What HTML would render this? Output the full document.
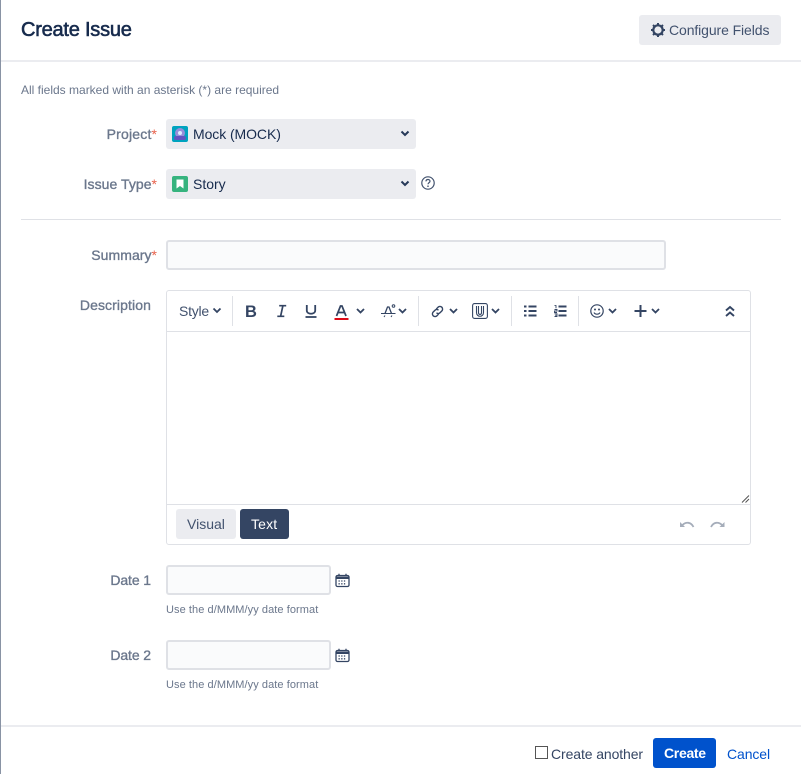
<!DOCTYPE html>
<html><head><meta charset="utf-8">
<style>
html,body{margin:0;padding:0;background:#fff}
body{width:801px;height:774px;position:relative;overflow:hidden;font-family:"Liberation Sans",sans-serif;color:#172b4d}
.a{position:absolute}
.t{position:absolute;white-space:nowrap;line-height:20px}
.lab{color:#6b778c;font-size:14px;font-weight:400;text-align:right;-webkit-text-stroke:.35px #6b778c;letter-spacing:.05px}
.req{color:#e8604a;font-size:14px;-webkit-text-stroke:0;letter-spacing:0}
.sel{position:absolute;left:166px;width:250px;height:30px;background:#ebecf0;border-radius:3px}
.inp{position:absolute;background:#fafbfc;border:2px solid #dfe1e6;border-radius:3px;box-sizing:border-box}
.sep{position:absolute;top:296px;width:1px;height:30px;background:#dfe1e6}
svg{position:absolute;overflow:visible}
.hint{position:absolute;font-size:11px;color:#6b778c;line-height:14px;white-space:nowrap;letter-spacing:.07px}
</style></head><body>
<div class="a" style="left:0;top:0;width:1px;height:774px;background:#8993a4"></div>
<div class="t" style="left:21px;top:18px;font-size:20px;line-height:24px;font-weight:400;color:#172b4d;letter-spacing:-.23px;-webkit-text-stroke:.6px #172b4d">Create Issue</div>
<div class="a" style="left:639px;top:15px;width:142px;height:30px;background:#ebecf0;border-radius:3px"></div>
<svg style="left:650px;top:22px" width="16" height="16" viewBox="0 0 16 16"><circle cx="8" cy="8" r="4.700" fill="none" stroke="#344563" stroke-width="2.200"/><g stroke="#344563" stroke-width="2"><path d="M8 1v2.200M8 12.800V15M1 8h2.200M12.800 8H15M3 3l1.600 1.600M11.400 11.400L13 13M3 13l1.600-1.600M11.400 4.600L13 3"/></g></svg>
<div class="t" style="left:669px;top:20px;font-size:14px;color:#42526e;letter-spacing:-.1px">Configure Fields</div>
<div class="a" style="left:1px;top:60px;width:800px;height:2px;background:#ebecf0"></div>
<div class="t" style="left:21px;top:80px;font-size:12px;color:#6b778c;letter-spacing:0">All fields marked with an asterisk (*) are required</div>

<div class="t lab" style="right:644px;top:124px;letter-spacing:.2px">Project<span class="req">*</span></div>
<div class="sel" style="top:119px"></div>
<div class="a" style="left:172px;top:126px;width:16px;height:16px;background:#00a3bf;border-radius:2px;overflow:hidden"><div class="a" style="left:3px;top:2px;width:10px;height:10px;border-radius:50%;background:#998dd9"></div><div class="a" style="left:2px;top:10px;width:12px;height:4px;border-radius:2px;background:#6554c0"></div><div class="a" style="left:6px;top:5px;width:4px;height:4px;border-radius:50%;background:#deebff"></div></div>
<div class="t" style="left:193px;top:124px;font-size:14px;color:#172b4d;letter-spacing:-.08px">Mock (MOCK)</div>
<svg style="left:400px;top:130px" width="10" height="8" viewBox="0 0 10 8"><path d="M1.500 1.500L5 5L8.500 1.500" fill="none" stroke="#253858" stroke-width="2"/></svg>

<div class="t lab" style="right:644px;top:174px">Issue Type<span class="req">*</span></div>
<div class="sel" style="top:169px"></div>
<div class="a" style="left:172px;top:176px;width:16px;height:16px;background:#36b37e;border-radius:2px"></div>
<svg style="left:172px;top:176px" width="16" height="16" viewBox="0 0 16 16"><path d="M4.500 3.500h7v9L8 10l-3.500 2.500z" fill="#fff"/></svg>
<div class="t" style="left:193px;top:174px;font-size:14px;color:#172b4d">Story</div>
<svg style="left:400px;top:180px" width="10" height="8" viewBox="0 0 10 8"><path d="M1.500 1.500L5 5L8.500 1.500" fill="none" stroke="#253858" stroke-width="2"/></svg>
<svg style="left:421px;top:176px" width="14" height="14" viewBox="0 0 14 14"><circle cx="7" cy="7" r="6.200" fill="none" stroke="#42526e" stroke-width="1.200"/><path d="M5 5.400C5 4 6 3.500 7 3.500S9 4.200 9 5.300C9 6.700 7 6.600 7 8.300" fill="none" stroke="#42526e" stroke-width="1.200"/><circle cx="7" cy="10.200" r=".8" fill="#42526e"/></svg>

<div class="a" style="left:21px;top:219px;width:760px;height:1px;background:#dfe1e6"></div>

<div class="t lab" style="right:644px;top:245px">Summary<span class="req">*</span></div>
<div class="inp" style="left:166px;top:240px;width:500px;height:30px"></div>

<div class="t lab" style="right:650px;top:295px;letter-spacing:.1px">Description</div>
<div class="a" style="left:166px;top:290px;width:585px;height:255px;box-sizing:border-box;border:1px solid #dfe1e6;border-radius:3px"></div>
<div class="a" style="left:167px;top:331px;width:583px;height:1px;background:#dfe1e6"></div>
<div class="a" style="left:167px;top:504px;width:583px;height:1px;background:#dfe1e6"></div>

<div class="t" style="left:179px;top:301px;font-size:14px;color:#42526e;letter-spacing:-.25px">Style</div>
<svg style="left:212px;top:307px" width="10" height="8"><path d="M1.500 1.500L5 5L8.500 1.500" fill="none" stroke="#344563" stroke-width="1.800"/></svg>
<div class="sep" style="left:232px"></div>
<div class="t" style="left:245px;top:302px;font-size:16.500px;font-weight:700;color:#344563">B</div>
<svg style="left:276px;top:304px" width="11" height="14"><path d="M3.200 1.700H10.200M6.900 1.700L4.600 12.300M1.300 12.300H8.300" fill="none" stroke="#344563" stroke-width="1.700"/></svg>
<svg style="left:305px;top:304px" width="13" height="14"><path d="M1.800 1V6.500C1.800 10.800 10.200 10.800 10.200 6.500V1" fill="none" stroke="#344563" stroke-width="1.800"/><path d="M.5 13H11.500" stroke="#344563" stroke-width="1.800"/></svg>
<svg style="left:334px;top:304px" width="15" height="16"><path d="M2.500 12L6.500 2H8L12 12M4 8.500H10.500" fill="none" stroke="#344563" stroke-width="1.700"/><path d="M.5 15H14.500" stroke="#de0a17" stroke-width="2"/></svg>
<svg style="left:356px;top:308px" width="9" height="7"><path d="M1 1L4.500 4.500L8 1" fill="none" stroke="#344563" stroke-width="1.800"/></svg>
<svg style="left:380px;top:304px" width="17" height="15"><path d="M5 9.500L7.500 3H9L11.500 9.500" fill="none" stroke="#344563" stroke-width="1.300"/><circle cx="13.500" cy="2" r="1.300" fill="none" stroke="#344563"/><path d="M1 9.500H15.500" stroke="#344563" stroke-width="1"/><path d="M4 13L5 11.500M11 13L12 11.500" stroke="#344563" stroke-width="1"/></svg>
<svg style="left:398px;top:308px" width="9" height="7"><path d="M1 1L4.500 4.500L8 1" fill="none" stroke="#344563" stroke-width="1.800"/></svg>
<div class="sep" style="left:418px"></div>
<svg style="left:430px;top:304px" width="15" height="15" viewBox="0 0 15 15"><path d="M6.200 5.200L8 3.300C9 2.300 10.700 2.200 11.800 3.200S12.800 6 11.800 7L10 8.800C9 9.800 7.500 9.800 6.500 8.800M8.800 9.800L7 11.700C6 12.700 4.300 12.800 3.200 11.800S2.200 9 3.200 8L5 6.200C6 5.200 7.500 5.200 8.500 6.200" fill="none" stroke="#344563" stroke-width="1.400"/></svg>
<svg style="left:449px;top:308px" width="9" height="7"><path d="M1 1L4.500 4.500L8 1" fill="none" stroke="#344563" stroke-width="1.800"/></svg>
<svg style="left:472px;top:303px" width="16" height="16" viewBox="0 0 16 16"><rect x=".6" y=".6" width="14.800" height="14.800" rx="2" fill="none" stroke="#344563" stroke-width="1.100"/><path d="M4.500 3V9.500C4.500 14.500 11.500 14.500 11.500 9.500V3M6.500 3V9.800C6.500 12 9.500 12 9.500 9.800V3" fill="none" stroke="#344563" stroke-width="1.100"/></svg>
<svg style="left:491px;top:308px" width="9" height="7"><path d="M1 1L4.500 4.500L8 1" fill="none" stroke="#344563" stroke-width="1.800"/></svg>
<div class="sep" style="left:511px"></div>
<svg style="left:524px;top:305px" width="13" height="12"><path d="M0 1.500H2.500M4.500 1.500H12.500M0 6H2.500M4.500 6H12.500M0 10.500H2.500M4.500 10.500H12.500" stroke="#344563" stroke-width="2"/></svg>
<svg style="left:554px;top:305px" width="13" height="12"><path d="M4.500 1.500H12.500M4.500 6H12.500M4.500 10.500H12.500" stroke="#344563" stroke-width="2"/><path d="M.5 .6H2V3.200M.5 4.500H3V6H.5V7.500H3M.5 8.800H3V11.500H.5M1 10.200H3" fill="none" stroke="#344563" stroke-width=".9"/></svg>
<div class="sep" style="left:578px"></div>
<svg style="left:590px;top:304px" width="14" height="14"><circle cx="7" cy="7" r="6.200" fill="none" stroke="#344563" stroke-width="1.200"/><circle cx="5" cy="5.500" r="1" fill="#344563"/><circle cx="9" cy="5.500" r="1" fill="#344563"/><path d="M4 8.500C5 10.800 9 10.800 10 8.500" fill="none" stroke="#344563" stroke-width="1.100"/></svg>
<svg style="left:608px;top:308px" width="9" height="7"><path d="M1 1L4.500 4.500L8 1" fill="none" stroke="#344563" stroke-width="1.800"/></svg>
<svg style="left:634px;top:305px" width="13" height="13"><path d="M6.500 0V12M.5 6H12.500" stroke="#344563" stroke-width="2"/></svg>
<svg style="left:651px;top:308px" width="9" height="7"><path d="M1 1L4.500 4.500L8 1" fill="none" stroke="#344563" stroke-width="1.800"/></svg>
<svg style="left:725px;top:305px" width="10" height="13"><path d="M1 5.500L5 2L9 5.500M1 11L5 7.500L9 11" fill="none" stroke="#344563" stroke-width="1.900"/></svg>

<svg style="left:742px;top:495px" width="8" height="8"><path d="M0 7.500L7 .5M3.500 7.500L7 4" stroke="#555" stroke-width="1"/></svg>

<div class="a" style="left:176px;top:509px;width:60px;height:30px;background:#ebecf0;border-radius:3px"></div>
<div class="t" style="left:187px;top:514px;font-size:14px;color:#42526e">Visual</div>
<div class="a" style="left:240px;top:509px;width:49px;height:30px;background:#344563;border-radius:3px"></div>
<div class="t" style="left:251px;top:514px;font-size:14px;color:#fff;letter-spacing:.15px">Text</div>
<svg style="left:680px;top:520px" width="15" height="10"><path d="M0 2V7H5Z" fill="#a5adba"/><path d="M2.500 5C6 1.500 11 2 13.500 7" fill="none" stroke="#a5adba" stroke-width="1.800"/></svg>
<svg style="left:710px;top:520px" width="15" height="10"><path d="M14.500 2V7H9.500Z" fill="#a5adba"/><path d="M12 5C8.500 1.500 3.500 2 1 7" fill="none" stroke="#a5adba" stroke-width="1.800"/></svg>

<div class="t lab" style="right:650px;top:570px;letter-spacing:-.1px">Date 1</div>
<div class="inp" style="left:166px;top:565px;width:165px;height:30px"></div>
<svg style="left:335px;top:573px" width="15" height="15" viewBox="0 0 15 15"><rect x="1" y="2.500" width="13" height="11" rx="1.500" fill="#fff" stroke="#344563" stroke-width="1.300"/><path d="M1 3.500H14V6H1Z" fill="#344563"/><path d="M4 .8V3M11 .8V3" stroke="#344563" stroke-width="1.300"/><path d="M3.500 8H11.500M3.500 10.800H11.500" stroke="#344563" stroke-width="1.300" stroke-dasharray="1.300 1.400"/></svg>
<div class="hint" style="left:166px;top:602.500px">Use the d/MMM/yy date format</div>

<div class="t lab" style="right:650px;top:645px;letter-spacing:-.1px">Date 2</div>
<div class="inp" style="left:166px;top:640px;width:165px;height:30px"></div>
<svg style="left:335px;top:648px" width="15" height="15" viewBox="0 0 15 15"><rect x="1" y="2.500" width="13" height="11" rx="1.500" fill="#fff" stroke="#344563" stroke-width="1.300"/><path d="M1 3.500H14V6H1Z" fill="#344563"/><path d="M4 .8V3M11 .8V3" stroke="#344563" stroke-width="1.300"/><path d="M3.500 8H11.500M3.500 10.800H11.500" stroke="#344563" stroke-width="1.300" stroke-dasharray="1.300 1.400"/></svg>
<div class="hint" style="left:166px;top:677.500px">Use the d/MMM/yy date format</div>

<div class="a" style="left:1px;top:725px;width:800px;height:2px;background:#ebecf0"></div>
<div class="a" style="left:535px;top:746px;width:13px;height:13px;box-sizing:border-box;border:1px solid #555;background:#fff"></div>
<div class="t" style="left:551px;top:744px;font-size:14px;color:#344563;letter-spacing:-.1px">Create another</div>
<div class="a" style="left:653px;top:738px;width:63px;height:30px;background:#0052cc;border-radius:3px"></div>
<div class="t" style="left:664px;top:743px;font-size:14px;font-weight:700;color:#fff;letter-spacing:-.3px">Create</div>
<div class="t" style="left:727px;top:744px;font-size:14px;color:#0052cc;letter-spacing:-.1px">Cancel</div>
</body></html>
